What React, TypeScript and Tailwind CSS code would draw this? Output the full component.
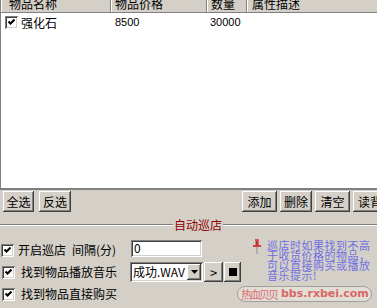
import React from "react";

const raised =
  "bg-[#d4d0c8] shadow-[inset_-1px_-1px_#404040,inset_1px_1px_#ffffff,inset_-2px_-2px_#808080,inset_2px_2px_#d4d0c8]";
const sunken =
  "bg-white shadow-[inset_1px_1px_#808080,inset_-1px_-1px_#ffffff,inset_2px_2px_#404040,inset_-2px_-2px_#d4d0c8]";

function Check() {
  return (
    <span className={`flex w-[13px] h-[13px] shrink-0 items-center justify-center ${sunken}`}>
      <svg width="7" height="7" viewBox="0 0 7 7">
        <path d="M0.5 2.5 L2.5 4.5 L6.5 0.5" fill="none" stroke="#000" strokeWidth="2" />
      </svg>
    </span>
  );
}

function Btn({ label, w = "w-[33px]" }: { label: string; w?: string }) {
  return (
    <div className={`${raised} ${w} h-[21px] shrink-0 flex items-center justify-center text-[12px] leading-[12px]`}>
      {label}
    </div>
  );
}

const columns = [
  { title: "物品名称", w: "w-[110px]", pl: "pl-[8px]" },
  { title: "物品价格", w: "w-[96px]", pl: "pl-[4px]" },
  { title: "数量", w: "w-[40px]", pl: "pl-[4px]" },
  { title: "属性描述", w: "w-[160px]", pl: "pl-[5px]" },
];

export default function App() {
  return (
    <div className="w-[377px] h-[308px] bg-[#d4d0c8] overflow-hidden relative font-['Noto_Sans_CJK_SC',sans-serif] text-[12px] text-black">
      {/* item list */}
      <div className="h-[190px] w-[420px] bg-white border-l border-b-2 border-[#808080]">
        <div className="flex h-[13px] bg-[#d4d0c8] border-b border-[#808080] overflow-hidden">
          {columns.map((c) => (
            <div
              key={c.title}
              className={`${c.w} ${c.pl} h-[12px] shrink-0 border-r border-[#808080] shadow-[inset_1px_0_#ffffff]`}
            >
              <span className="block leading-[12px] -mt-[2px]">{c.title}</span>
            </div>
          ))}
        </div>
        <div className="flex items-center h-[17px] mt-[1px]">
          <div className="w-[110px] flex items-center pl-[4px] gap-[3px]">
            <Check />
            <span className="leading-[14px]">强化石</span>
          </div>
          <div className="w-[96px] pl-[4px] font-['Liberation_Sans',sans-serif] text-[11px]">8500</div>
          <div className="w-[40px] pl-[3px] font-['Liberation_Sans',sans-serif] text-[11px]">30000</div>
        </div>
      </div>

      {/* buttons */}
      <div className="flex items-center h-[21px] mt-[1px] pl-[3px]">
        <Btn label="全选" w="w-[31px]" />
        <div className="ml-[5px]">
          <Btn label="反选" w="w-[32px]" />
        </div>
        <div className="ml-[171px] flex gap-[3px]">
          <Btn label="添加" w="w-[35px]" />
          <Btn label="删除" w="w-[32px]" />
          <Btn label="清空" w="w-[35px]" />
          <Btn label="读背" w="w-[34px]" />
        </div>
      </div>

      {/* group title */}
      <div className="flex items-center h-[12px] mt-[7px]">
        <div className="w-[173px] h-[2px] border-t border-b border-t-[#808080] border-b-white" />
        <span className="px-[1px] text-[#900000] leading-[12px]">自动巡店</span>
        <div className="flex-1 h-[2px] border-t border-b border-t-[#808080] border-b-white" />
      </div>

      {/* patrol settings */}
      <div className="flex mt-[8px]">
        <div className="w-[262px] flex flex-col">
          <div className="flex items-center h-[22px]">
            <div className="w-[131px] flex items-center pl-[1px]">
              <Check />
              <span className="ml-[4px] leading-[14px]">开启巡店</span>
              <span className="ml-[6px] leading-[14px]">间隔(分)</span>
            </div>
            <div className={`${sunken} w-[71px] h-[17px] pl-[3px] flex items-center leading-[12px] -mt-[4px]`}>
              0
            </div>
          </div>
          <div className="flex items-center h-[22px]">
            <div className="w-[130px] flex items-center pl-[2px]">
              <Check />
              <span className="ml-[6px] leading-[14px]">找到物品播放音乐</span>
            </div>
            <div className={`${sunken} w-[73px] h-[20px] flex items-center pl-[3px] pr-[2px]`}>
              <span className="leading-[12px]">成功.WAV</span>
              <span className={`${raised} ml-auto w-[14px] h-[16px] flex items-center justify-center`}>
                <svg width="7" height="4" viewBox="0 0 7 4">
                  <path d="M0 0 H7 L3.5 4 Z" fill="#000" />
                </svg>
              </span>
            </div>
            <div className={`${raised} ml-[1px] w-[19px] h-[20px] flex items-center justify-center text-[13px] leading-[13px]`}>
              &gt;
            </div>
            <div className={`${raised} ml-[1px] w-[17px] h-[20px] flex items-center justify-center`}>
              <span className="w-[8px] h-[8px] bg-black" />
            </div>
          </div>
          <div className="flex items-center h-[22px] pl-[2px]">
            <Check />
            <span className="ml-[6px] leading-[14px]">找到物品直接购买</span>
          </div>
        </div>

        <div className="flex">
          <svg width="8" height="15" viewBox="0 0 8 15" className="shrink-0">
            <rect x="2" y="0" width="4" height="2" fill="#e05050" />
            <rect x="2.5" y="2" width="3" height="4" fill="#c03030" />
            <rect x="0" y="6" width="8" height="2" fill="#d04040" />
            <rect x="3.5" y="8" width="1" height="7" fill="#909090" />
          </svg>
          <div className="ml-[6px] w-[110px] shrink-0 text-[#7070e0] text-[11px] tracking-[0.5px] leading-[10px] pt-[1px]">
            <div className="whitespace-nowrap">巡店时如果找到不高</div>
            <div className="whitespace-nowrap">于收货价格的物品，</div>
            <div className="whitespace-nowrap">可以直接购买或播放</div>
            <div className="whitespace-nowrap">音乐提示!</div>
          </div>
        </div>
      </div>

      {/* watermark */}
      <div className="absolute left-[237px] top-[286px] w-[135px] h-[16px] rounded-full border border-[#a0a0a0] bg-[#e8e4dc]/70 flex items-center pl-[3px] gap-[4px]">
        <span className="text-[11px] leading-[12px] tracking-[-2px] text-[#d87070]">热血贝贝</span>
        <span className="font-['DejaVu_Sans',sans-serif] font-bold text-[11px] leading-[12px] text-[#d86868]">
          bbs.rxbei.com
        </span>
      </div>
    </div>
  );
}
